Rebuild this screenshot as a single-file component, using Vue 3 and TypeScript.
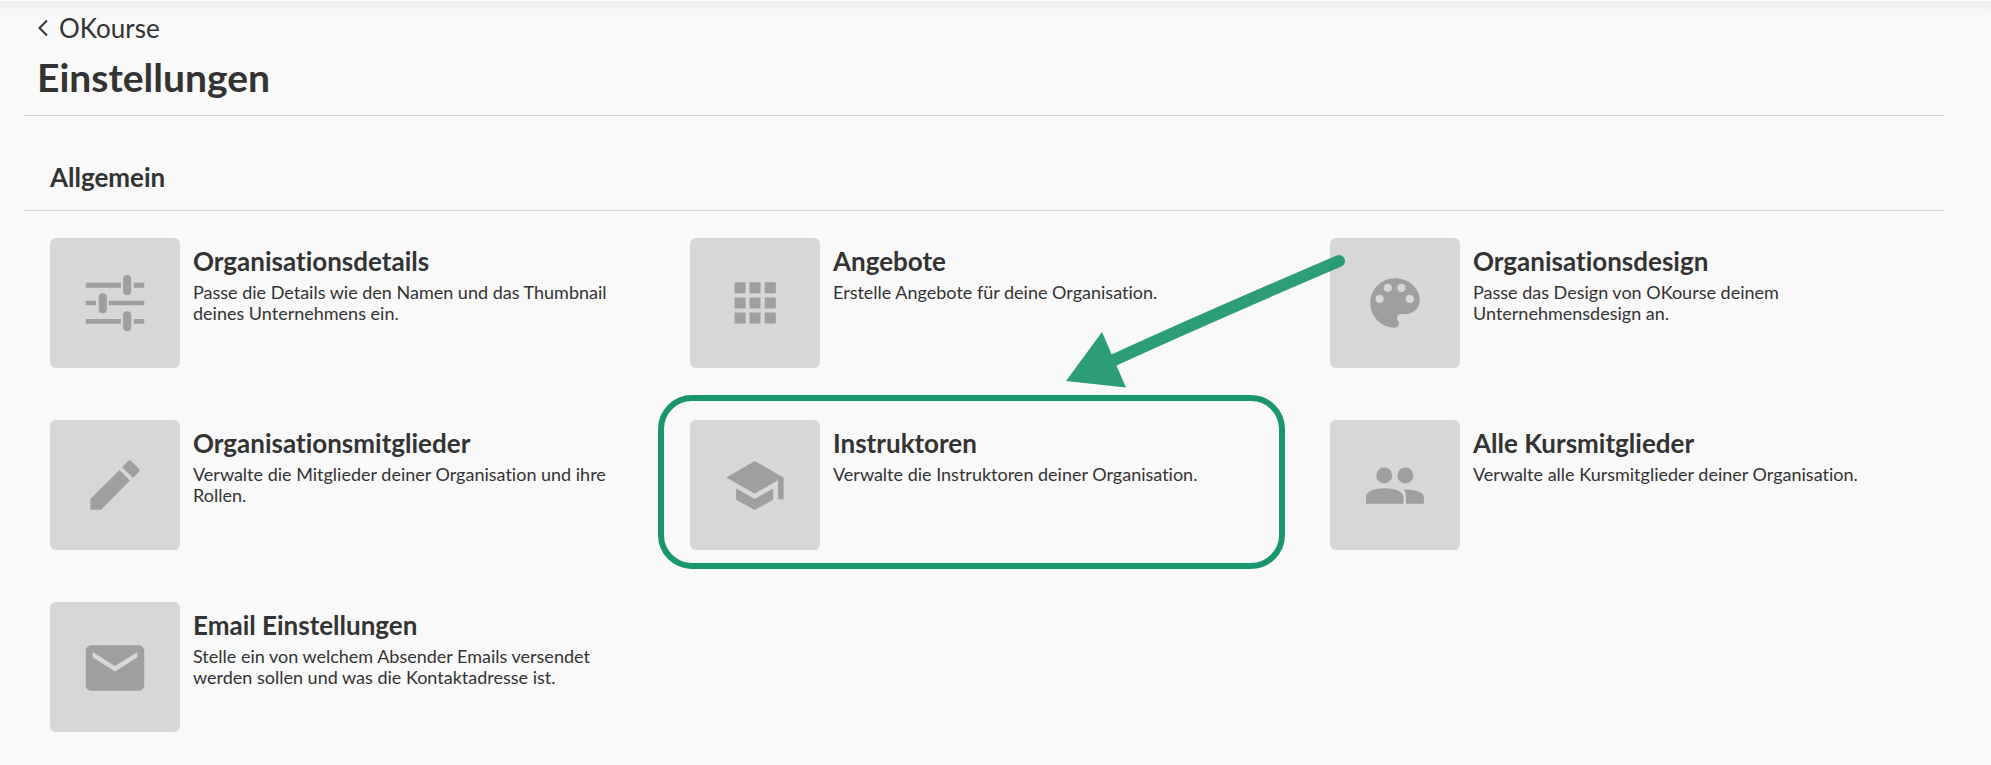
<script setup lang="ts">
interface SettingsEntry {
  id: string
  title: string
  text: string
  icon: string
  highlighted?: boolean
}

const entries: SettingsEntry[] = [
  {
    id: 'details',
    title: 'Organisationsdetails',
    text: 'Passe die Details wie den Namen und das Thumbnail deines Unternehmens ein.',
    icon: 'M3 5.8h10.8v1.5H3zM17.8 5.8H21v1.5h-3.2zM3 11.3h3.1v1.4H3zM10.1 11.3H21v1.4H10.1zM3 16.9h10.8v1.5H3zM17.8 16.9H21v1.5h-3.2zM15.75 3.4a1.25 1.25 0 0 1 1.25 1.25v3.7a1.25 1.25 0 0 1-2.5 0v-3.7a1.25 1.25 0 0 1 1.25-1.25zM8.25 9a1.25 1.25 0 0 1 1.25 1.25v3.7a1.25 1.25 0 0 1-2.5 0v-3.7A1.25 1.25 0 0 1 8.25 9zM15.75 14.5a1.25 1.25 0 0 1 1.25 1.25v3.7a1.25 1.25 0 0 1-2.5 0v-3.7a1.25 1.25 0 0 1 1.25-1.25z',
  },
  {
    id: 'offers',
    title: 'Angebote',
    text: 'Erstelle Angebote für deine Organisation.',
    icon: 'M5.7 5.6h3.4V9H5.7zM10.3 5.6h3.4V9h-3.4zM15 5.6h3.4V9H15zM5.7 10.3h3.4v3.4H5.7zM10.3 10.3h3.4v3.4h-3.4zM15 10.3h3.4v3.4H15zM5.7 14.9h3.4v3.4H5.7zM10.3 14.9h3.4v3.4h-3.4zM15 14.9h3.4v3.4H15z',
  },
  {
    id: 'design',
    title: 'Organisationsdesign',
    text: 'Passe das Design von OKourse deinem Unternehmensdesign an.',
    icon: 'M12 4.4c-4.2 0-7.6 3.4-7.6 7.6s3.4 7.6 7.6 7.6c.7 0 1.26-.56 1.26-1.26 0-.33-.12-.62-.32-.85-.2-.22-.32-.52-.32-.84 0-.7.56-1.27 1.26-1.27h1.5c2.33 0 4.22-1.9 4.22-4.22C19.6 7.4 16.2 4.4 12 4.4zM7.36 12a1.27 1.27 0 1 1 0-2.53 1.27 1.27 0 0 1 0 2.53zM9.9 8.6a1.27 1.27 0 1 1 0-2.53 1.27 1.27 0 0 1 0 2.53zM14.1 8.6a1.27 1.27 0 1 1 0-2.53 1.27 1.27 0 0 1 0 2.53zM16.64 12a1.27 1.27 0 1 1 0-2.53 1.27 1.27 0 0 1 0 2.53z',
  },
  {
    id: 'members',
    title: 'Organisationsmitglieder',
    text: 'Verwalte die Mitglieder deiner Organisation und ihre Rollen.',
    icon: 'M4.4 16.3v3.3h3.3l8.9-9-3.2-3.2zM19.3 8.1c.4-.4.4-.9 0-1.2l-2.2-2.2c-.3-.4-.8-.4-1.2 0l-1.7 1.8 3.3 3.3z',
  },
  {
    id: 'instructors',
    title: 'Instruktoren',
    text: 'Verwalte die Instruktoren deiner Organisation.',
    icon: 'M6.2 13.1v3.4l5.7 3.2 5.7-3.2v-3.4l-5.7 3.2zM11.9 4.6 3.2 9.7l8.7 5 7.2-4.2v5.9h1.7V9.7z',
    highlighted: true,
  },
  {
    id: 'participants',
    title: 'Alle Kursmitglieder',
    text: 'Verwalte alle Kursmitglieder deiner Organisation.',
    icon: 'M8.7 11.5a2.45 2.45 0 1 0 0-4.9 2.45 2.45 0 0 0 0 4.9zM15.2 11.5a2.45 2.45 0 1 0 0-4.9 2.45 2.45 0 0 0 0 4.9zM3.1 15.6c0-1.6 2.7-2.6 5.7-2.6s5.8 1 5.8 2.6v2.2H3.1zM14.7 13.4c3 0 6.2.7 6.2 2.3v2.1h-5.5v-2.2c0-.9-.3-1.6-.7-2.2z',
  },
  {
    id: 'email',
    title: 'Email Einstellungen',
    text: 'Stelle ein von welchem Absender Emails versendet werden sollen und was die Kontaktadresse ist.',
    icon: 'M19.2 5.3H4.8C3.8 5.3 3 6.1 3 7.1v10.4c0 1 .8 1.8 1.8 1.8h14.4c1 0 1.8-.8 1.8-1.8V7.1c0-1-.8-1.8-1.8-1.8zM12 13.4 5.1 9V7.4l6.9 4.3 6.9-4.3V9z',
  },
]
</script>

<template>
  <main class="page">
    <header class="page-header">
      <a class="back" href="#">
        <svg class="chevron" viewBox="0 0 12 18" aria-hidden="true">
          <path d="M10 1.5 2.5 9l7.5 7.5" />
        </svg>
        <span>OKourse</span>
      </a>
      <h1>Einstellungen</h1>
    </header>
    <section>
      <h2>Allgemein</h2>
      <ul class="grid">
        <li v-for="entry in entries" :key="entry.id" class="cell">
          <a class="entry" :href="`#${entry.id}`">
            <span class="tile">
              <svg viewBox="0 0 24 24" aria-hidden="true">
                <path :d="entry.icon" fill-rule="evenodd" />
              </svg>
            </span>
            <span class="copy">
              <strong>{{ entry.title }}</strong>
              <span class="text">{{ entry.text }}</span>
            </span>
          </a>
          <template v-if="entry.highlighted">
            <span class="ring"></span>
            <svg class="arrow" viewBox="0 0 280 134" aria-hidden="true">
              <g opacity="0.92">
                <path class="shaft" d="M273 7C210 34 120 73 48 106" />
                <path class="head" d="M0 127 36 78 60 133.5z" />
              </g>
            </svg>
          </template>
        </li>
      </ul>
    </section>
  </main>
</template>

<style>
body {
  margin: 0;
  background: #f9f9f9;
}
</style>

<style scoped>
.page {
  box-sizing: border-box;
  min-height: 100vh;
  padding: 0 47px 0 24px;
  border-top: 1px solid #fff;
  background: linear-gradient(#eee, #f6f6f6 10px, #f9f9f9 22px);
  color: #333;
  font-family: Lato, "Liberation Sans", sans-serif;
  font-variant-ligatures: none;
}

.page-header {
  padding: 12px 13px 15px;
  border-bottom: 1px solid #d6d6d6;
}

.back {
  display: inline-flex;
  align-items: center;
  gap: 10px;
  color: inherit;
  font-size: 26px;
  font-weight: 400;
  line-height: 30px;
  text-decoration: none;
}

.chevron {
  width: 12px;
  height: 18px;
  fill: none;
  stroke: #333;
  stroke-width: 2;
}

h1 {
  margin: 11px 0 0;
  font-size: 39px;
  font-weight: 700;
  line-height: 46px;
}

h2 {
  margin: 0;
  padding: 45px 26px 17px;
  border-bottom: 1px solid #d6d6d6;
  font-size: 26px;
  font-weight: 700;
  line-height: 32px;
}

.grid {
  display: grid;
  grid-template-columns: repeat(3, 1fr);
  row-gap: 52px;
  margin: 0;
  padding: 27px 0 24px;
  list-style: none;
}

.cell {
  position: relative;
}

.entry {
  display: flex;
  gap: 13px;
  padding: 0 13px 0 26px;
  color: inherit;
  text-decoration: none;
}

.tile {
  display: flex;
  flex: none;
  align-items: center;
  justify-content: center;
  width: 130px;
  height: 130px;
  border-radius: 6px;
  background: #d7d7d7;
}

.tile svg {
  width: 78px;
  height: 78px;
  fill: #9f9f9f;
}

.copy {
  display: flex;
  flex-direction: column;
  gap: 5px;
  max-width: 430px;
  padding-top: 7px;
}

strong {
  font-size: 26px;
  font-weight: 700;
  line-height: 32px;
}

.text {
  font-size: 18px;
  font-weight: 400;
  line-height: 21px;
}

.ring {
  position: absolute;
  inset: -25px 19px -19px -6px;
  border: 6px solid #1b956f;
  border-radius: 34px;
  pointer-events: none;
}

.arrow {
  position: absolute;
  z-index: 1;
  top: -166px;
  right: -42px;
  width: 280px;
  height: 134px;
  overflow: visible;
  pointer-events: none;
}

.shaft {
  fill: none;
  stroke: #1b956f;
  stroke-width: 12;
  stroke-linecap: round;
}

.head {
  fill: #1b956f;
}
</style>
